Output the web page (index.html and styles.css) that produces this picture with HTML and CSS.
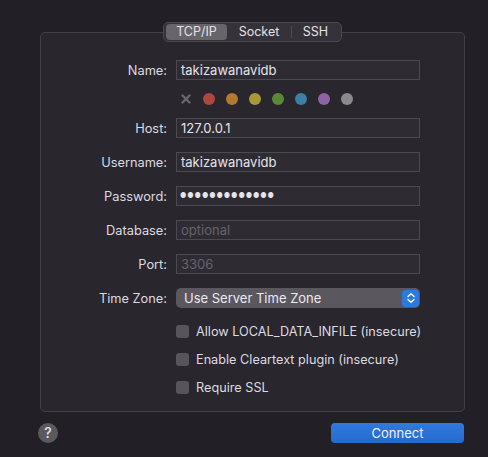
FILE: index.html
```html
<!DOCTYPE html>
<html>
<head>
<meta charset="utf-8">
<link rel="stylesheet" href="styles.css">
</head>
<body>
<div class="window">
  <div class="group">
    <div class="tabs">
      <div class="tab active">TCP/IP</div>
      <div class="tab">Socket</div>
      <div class="sep"></div>
      <div class="tab">SSH</div>
    </div>
    <div class="form">
      <div class="row">
        <label class="lbl">Name:</label>
        <div class="field">takizawanavidb</div>
      </div>
      <div class="colors">
        <svg class="x" width="12" height="12" viewBox="0 0 12 12"><path d="M2.5 2.5 L9.5 9.5 M9.5 2.5 L2.5 9.5" stroke="#6a676e" stroke-width="2.4" stroke-linecap="round"/></svg>
        <span class="dot c1"></span>
        <span class="dot c2"></span>
        <span class="dot c3"></span>
        <span class="dot c4"></span>
        <span class="dot c5"></span>
        <span class="dot c6"></span>
        <span class="dot c7"></span>
      </div>
      <div class="row">
        <label class="lbl">Host:</label>
        <div class="field">127.0.0.1</div>
      </div>
      <div class="row">
        <label class="lbl">Username:</label>
        <div class="field">takizawanavidb</div>
      </div>
      <div class="row">
        <label class="lbl">Password:</label>
        <div class="field pw">●●●●●●●●●●●●●</div>
      </div>
      <div class="row">
        <label class="lbl">Database:</label>
        <div class="field ph">optional</div>
      </div>
      <div class="row">
        <label class="lbl">Port:</label>
        <div class="field ph">3306</div>
      </div>
      <div class="row">
        <label class="lbl">Time Zone:</label>
        <div class="select">
          <span>Use Server Time Zone</span>
          <span class="stepper"><svg width="10" height="12" viewBox="0 0 10 12"><path d="M2 4.5 L5 1.8 L8 4.5 M2 7.5 L5 10.2 L8 7.5" fill="none" stroke="#fff" stroke-width="1.4" stroke-linecap="round" stroke-linejoin="round"/></svg></span>
        </div>
      </div>
      <div class="checks">
        <div class="check"><span class="box"></span>Allow LOCAL_DATA_INFILE (insecure)</div>
        <div class="check"><span class="box"></span>Enable Cleartext plugin (insecure)</div>
        <div class="check"><span class="box"></span>Require SSL</div>
      </div>
    </div>
  </div>
  <div class="footer">
    <div class="help">?</div>
    <div class="connect">Connect</div>
  </div>
</div>
</body>
</html>
```
FILE: styles.css
```css
html, body {
  margin: 0;
  padding: 0;
}
body {
  width: 488px;
  height: 457px;
  background: #221f27;
  font-family: Inter, "Noto Sans", "Liberation Sans", sans-serif;
  font-size: 12.5px;
  color: #dddbe0;
  overflow: hidden;
}
.window {
  padding: 32px 23px 0 40px;
}
.group {
  position: relative;
  height: 378px;
  border: 1px solid #434048;
  border-radius: 5px;
  background: #29262e;
}
.tabs {
  position: absolute;
  top: -11px;
  left: 122px;
  width: 179px;
  height: 20px;
  box-sizing: border-box;
  display: flex;
  align-items: center;
  padding: 0 2px;
  background: #35323a;
  border: 1px solid #4a474f;
  border-radius: 5px;
}
.tab {
  height: 16px;
  line-height: 16px;
  text-align: center;
  color: #e4e2e7;
  font-size: 12.5px;
}
.tab:nth-child(1) { width: 61px; }
.tab:nth-child(2) { width: 64px; }
.tab:nth-child(4) { width: 47px; }
.tab.active {
  background: #67646b;
  border-radius: 4px;
}
.sep {
  width: 1px;
  height: 12px;
  background: #4d4a52;
}
.form {
  padding-top: 27px;
}
.row {
  display: flex;
  align-items: center;
  height: 20px;
  margin-bottom: 14px;
}
.lbl {
  width: 126px;
  text-align: right;
  margin-right: 9px;
  color: #dddbe0;
  font-size: 12.8px;
}
.field {
  width: 244px;
  height: 20px;
  box-sizing: border-box;
  border: 1px solid #4c4951;
  background: #2e2b33;
  padding-left: 4px;
  line-height: 18px;
  color: #e6e4e9;
  font-size: 13px;
}
.field.ph {
  color: #67646c;
}
.field.pw {
  font-size: 7px;
  letter-spacing: 0.9px;
  line-height: 18px;
  padding-left: 3px;
}
.colors {
  display: flex;
  align-items: center;
  gap: 11px;
  height: 14px;
  margin: -2px 0 12px 139px;
}
.colors .x {
  width: 12px;
  height: 12px;
}
.dot {
  width: 12px;
  height: 12px;
  border-radius: 50%;
}
.c1 { background: #ad483f; }
.c2 { background: #b47a30; }
.c3 { background: #a89937; }
.c4 { background: #5a8936; }
.c5 { background: #3b80a6; }
.c6 { background: #8c64a3; }
.c7 { background: #8a898d; }
.select {
  width: 244px;
  height: 20px;
  box-sizing: border-box;
  background: #5a575f;
  border-radius: 5px;
  display: flex;
  align-items: center;
  justify-content: space-between;
  padding: 0 1px 0 8px;
  color: #eceaef;
  font-size: 13px;
}
.stepper {
  width: 17px;
  height: 17px;
  border-radius: 4px;
  background: #2e78e2;
  display: flex;
  align-items: center;
  justify-content: center;
}
.checks {
  margin-left: 135px;
  padding-top: 2px;
}
.check {
  display: flex;
  align-items: center;
  height: 15px;
  margin-bottom: 13px;
  color: #dddbe0;
  font-size: 12.7px;
}
.box {
  width: 13px;
  height: 13px;
  border-radius: 3px;
  background: #57545b;
  margin-right: 7px;
}
.footer {
  display: flex;
  justify-content: space-between;
  align-items: center;
  margin-top: 11px;
  margin-left: -2px;
}
.help {
  width: 20px;
  height: 20px;
  border-radius: 50%;
  background: #5b595e;
  color: #e6e4e9;
  text-align: center;
  line-height: 20px;
  font-size: 14px;
  font-weight: 500;
}
.connect {
  width: 133px;
  height: 20px;
  border-radius: 4px;
  background: linear-gradient(#2f7ae0, #2769cc);
  color: #eef2fa;
  text-align: center;
  line-height: 20px;
  font-size: 13px;
  margin-right: 1px;
}
```
